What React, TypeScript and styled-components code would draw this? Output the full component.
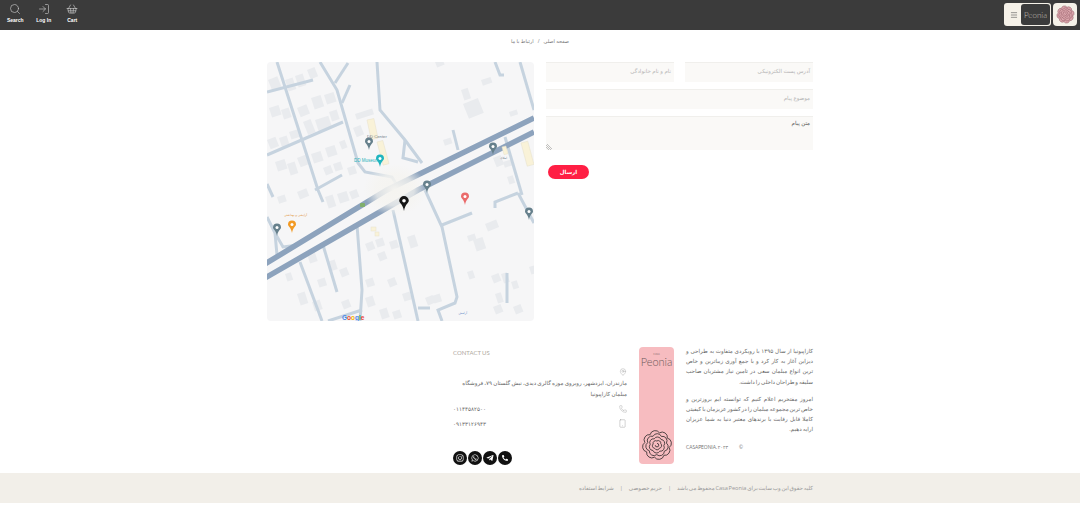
import React from 'react'
import styled, { createGlobalStyle } from 'styled-components'
import { Search, LogIn, ShoppingBasket, Menu, MapPin, Phone, Smartphone } from 'lucide-react'
import { FaInstagram, FaWhatsapp, FaTelegramPlane, FaPhoneAlt } from 'react-icons/fa'

const fontStack = `"Open Sans", "DejaVu Sans", sans-serif`

const GlobalStyle = createGlobalStyle`
    html, body { margin: 0; padding: 0; background: #fff; }
    body { font-family: ${fontStack}; color: #444; }
    * { box-sizing: border-box; }
`

const Header = styled.header`
    height: 30px;
    background: #3b3b3b;
    display: flex;
    justify-content: space-between;
    align-items: flex-start;
    padding: 3px 3px 0 0;
`

const HeaderLinks = styled.nav`
    display: flex;
    padding-left: 1px;
`

const HeaderLink = styled.div`
    width: 28.500px;
    display: flex;
    flex-direction: column;
    align-items: center;
    color: #fff;
    font-family: "Liberation Sans", sans-serif;
    font-size: 5px;
    font-weight: 700;
    line-height: 8px;
    svg { color: #c9c9c9; margin-bottom: 1px; }
`

const HeaderBrand = styled.div`
    display: flex;
    gap: 2px;
`

const BrandBox = styled.div`
    width: 47px;
    height: 23px;
    background: #f5f1e8;
    border-radius: 3px;
    display: flex;
    align-items: center;
    justify-content: space-between;
    padding: 1px;
    color: #555;
    svg { margin-left: 5px; }
`

const BrandDark = styled.div`
    width: 29px;
    height: 21px;
    background: #3b3b3b;
    border-radius: 3px;
    color: #c9c2bb;
    font-family: Lato, sans-serif;
    font-size: 8px;
    font-weight: 300;
    display: flex;
    align-items: center;
    justify-content: center;
`

const RoundBox = styled.div`
    width: 24px;
    height: 23px;
    background: #f5f1e8;
    border-radius: 4px;
    display: flex;
    align-items: center;
    justify-content: center;
`

const Breadcrumb = styled.div`
    direction: rtl;
    height: 32px;
    padding-top: 8px;
    display: flex;
    justify-content: center;
    gap: 4px;
    font-size: 5px;
    line-height: 7px;
    color: #777;
`

const Container = styled.div`
    width: 546px;
    margin: 0 auto;
`

const ContactRow = styled.div`
    display: grid;
    grid-template-columns: 267px 267px;
    column-gap: 12px;
`

const MapBox = styled.div`
    height: 259px;
    background: #f6f6f7;
    border-radius: 4px;
    overflow: hidden;
    svg { display: block; }
`

const Form = styled.form`
    direction: rtl;
    display: flex;
    flex-direction: column;
    gap: 7px;
`

const FieldRow = styled.div`
    display: grid;
    grid-template-columns: 128px 128px;
    justify-content: space-between;
`

const Field = styled.div`
    height: 20px;
    background: #faf9f7;
    border-top: 1px solid #f0efec;
    padding: 4px 3px 0;
    font-size: 5.500px;
    line-height: 8px;
    color: #b5b5b5;
`

const TextArea = styled(Field)`
    height: 34px;
    padding-top: 2px;
    color: #555;
    position: relative;
`

const Grip = styled.svg`
    position: absolute;
    left: 0;
    bottom: 0;
`

const SendButton = styled.div`
    width: 41px;
    height: 14px;
    margin: 8px 224px 0 0;
    background: #ff1f44;
    border-radius: 7px;
    color: #fff;
    font-size: 5.500px;
    font-weight: 700;
    display: flex;
    align-items: center;
    justify-content: center;
`

const Footer = styled.div`
    direction: rtl;
    margin-top: 26px;
    height: 126px;
    display: flex;
`

const About = styled.div`
    width: 127px;
    margin-top: -1px;
    font-size: 5.600px;
    line-height: 10.200px;
    word-spacing: -0.500px;
    color: #666;
`

const AboutParagraph = styled.div`
    margin-bottom: 7px;
`

const AboutLine = styled.div<{ $last?: boolean }>`
    white-space: nowrap;
    text-align: justify;
    text-align-last: ${p => (p.$last ? 'right' : 'justify')};
`

const Copyright = styled.div`
    direction: ltr;
    color: #777;
    font-size: 4.800px;
    font-family: Lato, ${fontStack};
    display: flex;
    gap: 11px;
`

const PinkPanel = styled.div`
    width: 35px;
    height: 117px;
    margin-right: 12px;
    background: #f7bcc0;
    border-radius: 4px;
    display: flex;
    flex-direction: column;
    align-items: center;
    justify-content: space-between;
    padding: 6px 0 3px;
    color: #6d5a5a;
`

const PanelWord = styled.div`
    direction: ltr;
    font-family: Lato, sans-serif;
    font-weight: 300;
    font-size: 11px;
    line-height: 11px;
    text-align: center;
    small { display: block; font-size: 3.500px; line-height: 3px; }
`

const ContactColumn = styled.div`
    width: 174px;
    margin-right: 12px;
    font-size: 5.600px;
    word-spacing: -0.300px;
    color: #666;
`

const ContactTitle = styled.div`
    direction: ltr;
    font-family: Lato, sans-serif;
    font-size: 6px;
    line-height: 12px;
    color: #b0a9a0;
    margin-bottom: 9px;
`

const ContactLine = styled.div`
    svg { display: block; color: #8a8a8a; }
`

const AddressText = styled.div`
    line-height: 10.500px;
    margin: 2px 0;
`

const PhoneLine = styled(ContactLine)`
    display: flex;
    justify-content: space-between;
    align-items: center;
    height: 15px;
`

const PhoneNumber = styled.span`
    font-size: 5.600px;
    color: #666;
`

const Socials = styled.div`
    direction: ltr;
    display: flex;
    gap: 1px;
    margin-top: 20px;
`

const Social = styled.div`
    width: 14px;
    height: 14px;
    border-radius: 50%;
    background: #111;
    color: #fff;
    display: flex;
    align-items: center;
    justify-content: center;
`

const LegalBand = styled.div`
    height: 30px;
    background: #f2efe9;
`

const LegalInner = styled(Container)`
    direction: rtl;
    height: 100%;
    display: flex;
    align-items: center;
    gap: 6px;
    font-size: 5.600px;
    word-spacing: -0.700px;
    color: #999;
`

const aboutParagraphs = [
    [
        'کازاپیونیا از سال ۱۳۹۵ با رویکردی متفاوت به طراحی و',
        'دیزاین آغاز به کار کرد و با جمع آوری زیباترین و خاص',
        'ترین انواع مبلمان سعی در تامین نیاز مشتریان صاحب',
        'سلیقه و طراحان داخلی را داشت.',
    ],
    [
        'امروز مفتخریم اعلام کنیم که توانسته ایم بروزترین و',
        'خاص ترین مجموعه مبلمان را در کشور عزیزمان با کیفیتی',
        'کاملا قابل رقابت با برندهای معتبر دنیا به شما عزیزان',
        'ارایه دهیم.',
    ],
]

// one ring of overlapping petals, drawn as arcs between points on a circle
const petalRing = (r: number, n: number, rot: number) => {
    const pts = Array.from({ length: n }, (_, i) => {
        const a = rot + (i * Math.PI * 2) / n
        return [20 + r * Math.cos(a), 20 + r * Math.sin(a)]
    })
    const arc = r * Math.sin(Math.PI / n) * 1.1
    const head = `M${pts[0][0].toFixed(1)} ${pts[0][1].toFixed(1)}`
    const tail = [...pts.slice(1), pts[0]]
        .map(([x, y]) => `A${arc.toFixed(1)} ${arc.toFixed(1)} 0 0 1 ${x.toFixed(1)} ${y.toFixed(1)}`)
        .join('')
    return `${head}${tail}Z`
}

const Rose = ({ size, stroke, fill }: { size: number; stroke: string; fill?: string }) => (
    <svg width={size} height={size} viewBox="0 0 40 40" fill={fill || 'none'} stroke={stroke} strokeWidth="1.100">
        <path d={petalRing(15.500, 8, 0.2)} />
        <path d={petalRing(12, 7, 0.7)} />
        <path d={petalRing(8.500, 6, 0.1)} />
        <path d={petalRing(5, 5, 0.9)} />
        <path d="M20 18a2.200 2.200 0 1 1-2.200 2.200" />
    </svg>
)

const mainRoads = [
    'M-2 202L120 128L267 56',
    'M-2 216L151 128L267 70',
]

const sideRoads = [
    'M10 0L51 128L56 140',
    'M0 30L46 18',
    'M53 0L70 28L91 101L98 110L125 115L131 125',
    'M81 1L68 21',
    'M83 23L75 41',
    'M0 93L76 60',
    'M110 0L113 48L138 78L155 101',
    'M138 78L136 96L151 100',
    'M228 0L233 13L237 13',
    'M253 0L267 48',
    'M186 68L191 88',
    'M238 75L255 133',
    'M75 113L48 128',
    'M0 122L6 135',
    'M158 128L175 165L190 235L188 241L171 248L175 259',
    'M175 163L205 151',
    'M126 148L151 259',
    'M90 163L95 228L93 259',
    'M95 248L61 259',
    'M56 183L70 230',
    'M33 200L55 259',
    'M0 155L8 171L10 193',
    'M8 171L16 185L31 183',
    'M151 246L163 246',
    'M228 146L228 140L251 131',
    'M251 131L267 161',
    'M240 211L240 241',
]

const blocks: number[][] = [
    [1, 18, 10, 12], [18, 18, 8, 12], [28, 14, 8, 12], [40, 8, 8, 10], [2, 46, 10, 10], [14, 48, 8, 10],
    [30, 46, 10, 10], [44, 36, 10, 12], [57, 33, 10, 10], [36, 60, 8, 14], [48, 58, 14, 12], [62, 50, 8, 10],
    [0, 78, 9, 10], [12, 76, 8, 10], [22, 70, 9, 8], [30, 96, 9, 10], [44, 92, 10, 10], [58, 86, 10, 10],
    [72, 80, 6, 8], [8, 100, 10, 10], [20, 102, 8, 12], [56, 106, 8, 8], [66, 102, 8, 8], [80, 106, 8, 8],
    [168, 0, 8, 6], [214, 18, 10, 6], [194, 28, 7, 11], [196, 42, 16, 16], [242, 50, 8, 5], [176, 78, 8, 6],
    [226, 96, 8, 10], [236, 100, 8, 6], [88, 52, 18, 6], [86, 66, 8, 10], [240, 115, 6, 8],
    [10, 135, 8, 7], [30, 130, 10, 8], [58, 135, 8, 12], [70, 132, 10, 10], [82, 130, 8, 8],
    [40, 192, 8, 10], [60, 200, 8, 10], [72, 208, 8, 8], [50, 218, 8, 8], [18, 212, 6, 8],
    [98, 182, 8, 8], [108, 178, 8, 8], [122, 180, 8, 8], [110, 192, 8, 8], [98, 218, 8, 8],
    [98, 236, 8, 10], [120, 218, 8, 8], [140, 175, 8, 12], [135, 232, 8, 8], [158, 236, 8, 8],
    [165, 234, 8, 8], [200, 174, 8, 6], [218, 162, 12, 8], [206, 178, 10, 12], [200, 210, 6, 8],
    [224, 214, 8, 8], [234, 212, 6, 10], [228, 232, 6, 10], [226, 245, 8, 8], [244, 220, 6, 8], [262, 205, 5, 8],
    [246, 245, 8, 8], [30, 232, 8, 12], [45, 240, 8, 10], [74, 240, 8, 8], [112, 248, 8, 10], [125, 250, 8, 8],
]

const greyPins = [[102, 83], [160, 126], [226, 88], [262, 153], [10, 169]]

const MapPinMark = ({ x, y, color, scale = 1 }: { x: number; y: number; color: string; scale?: number }) => (
    <g transform={`translate(${x} ${y}) scale(${scale})`}>
        <path d="M0 5C-1-1-4-1.500-4-3.500A4 4 0 0 1 4-3.500C4-1.500 1-1 0 5Z" fill={color} />
        <circle cy="-3.500" r="1.500" fill="#fff" />
    </g>
)

const MapDrawing = () => (
    <svg width="267" height="259" viewBox="0 0 267 259">
        <defs>
            <radialGradient id="fade">
                <stop offset="0" stopColor="#f5f4f0" stopOpacity="1" />
                <stop offset="0.6" stopColor="#f5f4f0" stopOpacity="0.75" />
                <stop offset="1" stopColor="#f5f4f0" stopOpacity="0" />
            </radialGradient>
        </defs>
        {blocks.map(([x, y, w, h], i) => (
            <rect key={i} x={x} y={y} width={w} height={h} fill="#e9ebee" transform={`rotate(${i % 3 === 0 ? -22 : -18} ${x} ${y})`} />
        ))}
        <g fill="none" stroke="#c6d3df" strokeWidth="3">
            {sideRoads.map(d => <path key={d} d={d} />)}
        </g>
        <g fill="none" stroke="#8da3bd" strokeWidth="5.500">
            {mainRoads.map(d => <path key={d} d={d} />)}
        </g>
        <ellipse cx="128" cy="128" rx="32" ry="26" fill="url(#fade)" />
        <g fill="#f9f2d8" stroke="#e8e2cc" strokeWidth="0.500">
            <rect x="100" y="58" width="7" height="20" transform="rotate(-12 100 58)" />
            <rect x="110" y="80" width="6" height="24" transform="rotate(-15 110 80)" />
            <rect x="254" y="81" width="7" height="24" transform="rotate(-15 254 81)" />
            <rect x="235" y="85" width="4" height="8" transform="rotate(-15 235 85)" />
            <rect x="104" y="165" width="5" height="4" />
            <rect x="108" y="170" width="4" height="4" />
        </g>
        <rect x="93" y="141" width="5" height="4" rx="1" fill="#7fae6c" />
        {greyPins.map(([x, y]) => <MapPinMark key={x} x={x} y={y} color="#66808c" />)}
        <MapPinMark x={113} y={100} color="#1fb5bf" />
        <MapPinMark x={25} y={166} color="#f29a24" />
        <MapPinMark x={198} y={138} color="#ea6b6b" />
        <MapPinMark x={137} y={143} color="#151515" scale={1.2} />
        <g fontFamily='"Liberation Sans", sans-serif'>
            <text x="100" y="76" fontSize="4.200" fill="#70808a">DD Center</text>
            <text x="87" y="100" fontSize="4.500" fill="#28b3ba">DD Museum</text>
        </g>
        <g fontFamily='"DejaVu Sans", sans-serif' fontSize="3" direction="rtl">
            <text x="40" y="154" fill="#e08a1f">آرایشی و بهداشتی</text>
            <text x="240" y="97" fill="#70808a">املاک</text>
            <text x="200" y="252" fill="#5a7fc4">آرامش</text>
        </g>
        <text x="75" y="258" fontFamily='"Liberation Sans", sans-serif' fontSize="6.500" fontWeight="700">
            <tspan fill="#4a86e8">G</tspan><tspan fill="#e8453c">o</tspan><tspan fill="#f4b400">o</tspan><tspan fill="#4a86e8">g</tspan><tspan fill="#34a853">l</tspan><tspan fill="#e8453c">e</tspan>
        </text>
    </svg>
)

export default function App() {
    return (
        <>
            <GlobalStyle />
            <Header>
                <HeaderLinks>
                    <HeaderLink><Search size={12} strokeWidth={1.3} />Search</HeaderLink>
                    <HeaderLink><LogIn size={12} strokeWidth={1.3} />Log In</HeaderLink>
                    <HeaderLink><ShoppingBasket size={12} strokeWidth={1.3} />Cart</HeaderLink>
                </HeaderLinks>
                <HeaderBrand>
                    <BrandBox>
                        <Menu size={8} strokeWidth={1.8} />
                        <BrandDark>Peonia</BrandDark>
                    </BrandBox>
                    <RoundBox><Rose size={19} stroke="#8d5560" fill="#dba6ac" /></RoundBox>
                </HeaderBrand>
            </Header>
            <Breadcrumb>
                <span>صفحه اصلی</span>
                <span>/</span>
                <span>ارتباط با ما</span>
            </Breadcrumb>
            <Container>
                <ContactRow>
                    <MapBox><MapDrawing /></MapBox>
                    <Form>
                        <FieldRow>
                            <Field>آدرس پست الکترونیکی</Field>
                            <Field>نام و نام خانوادگی</Field>
                        </FieldRow>
                        <Field>موضوع پیام</Field>
                        <TextArea>
                            متن پیام
                            <Grip width="6" height="6" viewBox="0 0 6 6" stroke="#999" strokeWidth="0.600">
                                <path d="M0 1L5 6M0 3L3 6M1 0L6 5" />
                            </Grip>
                        </TextArea>
                        <SendButton>ارسال</SendButton>
                    </Form>
                </ContactRow>
                <Footer>
                    <About>
                        {aboutParagraphs.map(lines => (
                            <AboutParagraph key={lines[0]}>
                                {lines.map((line, i) => (
                                    <AboutLine key={line} $last={i === lines.length - 1}>{line}</AboutLine>
                                ))}
                            </AboutParagraph>
                        ))}
                        <Copyright><span>CASAPEONIA. ۲۰۲۳</span><span>©</span></Copyright>
                    </About>
                    <PinkPanel>
                        <PanelWord><small>casa</small>Peonia</PanelWord>
                        <Rose size={32} stroke="#3d3435" />
                    </PinkPanel>
                    <ContactColumn>
                        <ContactTitle>CONTACT US</ContactTitle>
                        <ContactLine><MapPin size={8} strokeWidth={1} /></ContactLine>
                        <AddressText>مازندران، ایزدشهر، روبروی موزه گالری دیدی، نبش گلستان ۷۹، فروشگاه مبلمان کازاپیونیا</AddressText>
                        <PhoneLine>
                            <Phone size={8} strokeWidth={1} />
                            <PhoneNumber>۰۱۱۴۴۵۸۲۵۰۰</PhoneNumber>
                        </PhoneLine>
                        <PhoneLine>
                            <Smartphone size={9} strokeWidth={1} />
                            <PhoneNumber>۰۹۱۳۳۱۲۶۹۴۳</PhoneNumber>
                        </PhoneLine>
                        <Socials>
                            <Social><FaInstagram size={8} /></Social>
                            <Social><FaWhatsapp size={8} /></Social>
                            <Social><FaTelegramPlane size={8} /></Social>
                            <Social><FaPhoneAlt size={6} /></Social>
                        </Socials>
                    </ContactColumn>
                </Footer>
            </Container>
            <LegalBand>
                <LegalInner>
                    <span>کلیه حقوق این وب سایت برای Casa Peonia محفوظ می باشد</span>
                    <span>|</span>
                    <span>حریم خصوصی</span>
                    <span>|</span>
                    <span>شرایط استفاده</span>
                </LegalInner>
            </LegalBand>
        </>
    )
}
